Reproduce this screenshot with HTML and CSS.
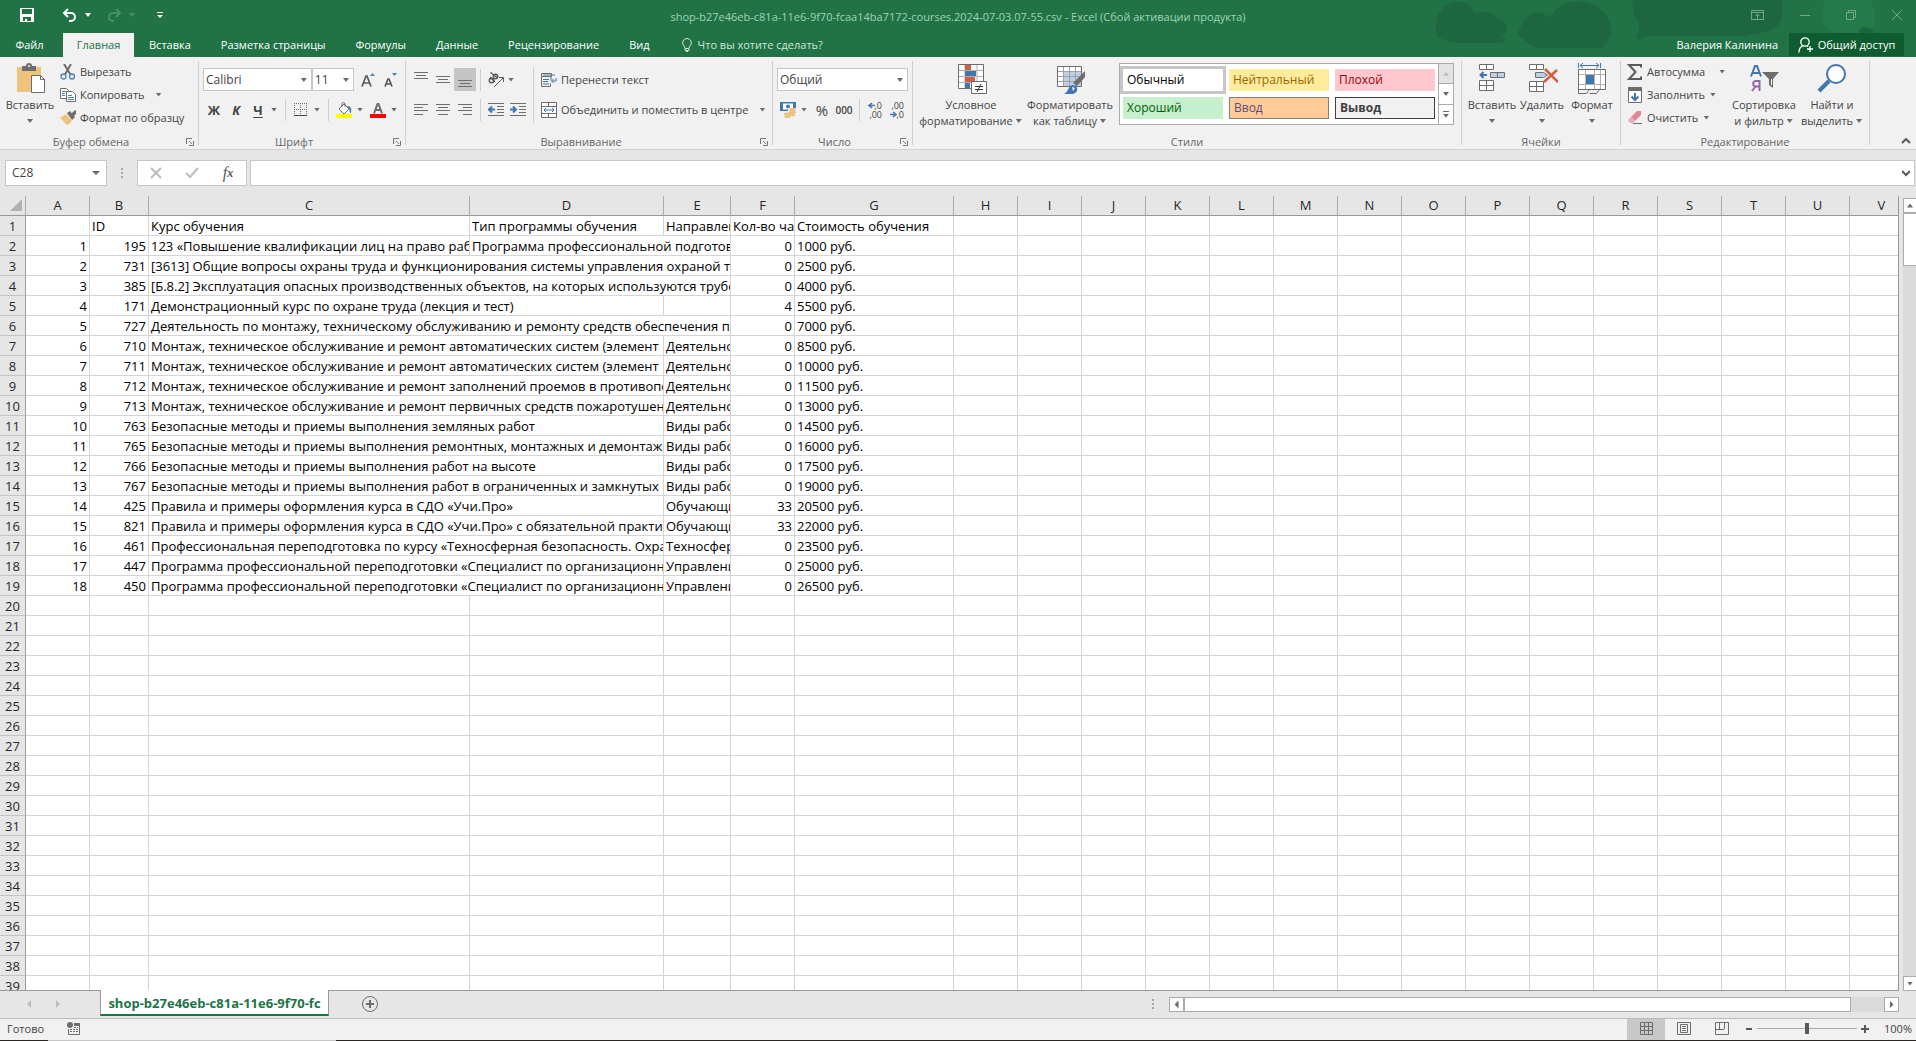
FILE: index.html
```html
<!DOCTYPE html>
<html lang="ru">
<head>
<meta charset="utf-8">
<title>shop-b27e46eb-c81a-11e6-9f70-fcaa14ba7172-courses.2024-07-03.07-55.csv - Excel</title>
<link rel="stylesheet" href="styles.css">
</head>
<body>
<header class="top">
  <svg class="clouds" width="486" height="57" viewBox="0 0 486 57" aria-hidden="true">
    <g fill="#1e663f">
      <path d="M8 38C3 30 6 8 20 3c12-4 22 2 25 10 10-4 20 0 23 6 12 2 10 14 3 18 8 0 6 6-4 6H30c-8 0-16-4-22-5z"/>
      <path d="M92 38c-8 0-2-12 6-22 6-6 16-4 22 2C126 5 140 0 154 2c16 2 28 16 27 30-1 10-8 12-8 16H112c-8 0-14-4-20-10z"/>
      <path d="M202 0h150v20c-10 16-30 12-36 16H218c-10 6-14 4-10-4 4-6 0-12-4-16z"/>
    </g>
    <path fill="#257a4a" d="M396 0h44c8 14 8 28-4 33h-30c-14-6-18-20-10-33z"/>
    <path fill="#1e663f" d="M428 33c2-8 12-8 16 0z"/>
  </svg>
  <div class="titlebar">
    <div class="quick">
      <button class="qbtn" aria-label="Сохранить"><svg width="14" height="14" viewBox="0 0 14 14"><path fill="#fff" fill-rule="evenodd" d="M0 0h14v14H0zM2 1v5h10V1zM3 9v4h2v-2h2v2h4V9z"/></svg></button>
      <button class="qbtn undo" aria-label="Отменить"><svg width="16" height="14" viewBox="0 0 16 14"><path d="M2 5h7a4 4 0 0 1 0 8H7M6 1L2 5l4 4" fill="none" stroke="#fff" stroke-width="2"/></svg><i class="arr"></i></button>
      <button class="qbtn redo" aria-label="Вернуть"><svg width="16" height="14" viewBox="0 0 16 14"><path d="M14 5H7a4 4 0 0 0 0 8h1M10 1l4 4-4 4" fill="none" stroke="#4a8f69" stroke-width="2"/></svg><i class="arr"></i></button>
      <button class="qbtn more" aria-label="Настройка панели"><svg width="6" height="7" viewBox="0 0 6 7"><path fill="#fff" d="M0 0h6v1H0zM0 3h6L3 6z"/></svg></button>
    </div>
    <h1 class="doc">shop-b27e46eb-c81a-11e6-9f70-fcaa14ba7172-courses.2024-07-03.07-55.csv - Excel (Сбой активации продукта)</h1>
    <div class="winctl">
      <button aria-label="Параметры отображения ленты"><svg width="13" height="10" viewBox="0 0 13 10"><path d="M.5.5h12v9H.5zM1 2.500h11M6.500 9V4M4.500 6l2-2 2 2" fill="none" stroke="#72a888"/></svg></button>
      <button aria-label="Свернуть"><svg width="10" height="10" viewBox="0 0 10 10"><path d="M0 5.500h10" stroke="#72a888"/></svg></button>
      <button aria-label="Восстановить"><svg width="10" height="10" viewBox="0 0 10 10"><path d="M.5 2.500h7v7h-7zM2.500 2.500v-2h7v7h-2" fill="none" stroke="#72a888"/></svg></button>
      <button aria-label="Закрыть"><svg width="10" height="10" viewBox="0 0 10 10"><path d="M0 0l10 10M10 0L0 10" fill="none" stroke="#72a888"/></svg></button>
    </div>
  </div>
  <nav class="tabs">
    <button class="tab file">Файл</button>
    <button class="tab active">Главная</button>
    <button class="tab">Вставка</button>
    <button class="tab">Разметка страницы</button>
    <button class="tab">Формулы</button>
    <button class="tab">Данные</button>
    <button class="tab">Рецензирование</button>
    <button class="tab">Вид</button>
    <button class="tab tell"><svg width="10" height="14" viewBox="0 0 10 14"><path d="M3 10.500C3 8 .7 7.500.7 4.700a4.300 4.200 0 0 1 8.600 0C9.300 7.500 7 8 7 10.500zM3 11v1.500h4V11M4 13.500h2" fill="none" stroke="#d5e8dc"/></svg>Что вы хотите сделать?</button>
    <span class="grow"></span>
    <button class="tab user">Валерия Калинина</button>
    <button class="share"><svg width="16" height="16" viewBox="0 0 16 16"><circle cx="7" cy="5" r="4.200" fill="none" stroke="#fff" stroke-width="1.300"/><path d="M1 15.500c0-4 2-6 4-6.800M9 9l1 .7M12 9v6M9 12h6" fill="none" stroke="#fff" stroke-width="1.300"/></svg>Общий доступ</button>
  </nav>
</header>

<section class="ribbon">
  <div class="group g-clip">
    <div class="gbody">
      <button class="big paste"><svg width="32" height="32" viewBox="0 0 32 32"><rect x="3" y="4" width="24" height="25" fill="#eec47c"/><path fill="#6d6d6d" d="M8 3h4a3 3 0 0 1 6 0h4v5H8z"/><circle cx="15" cy="3" r="1" fill="#f0f0f0"/><path d="M17.500 12.500h9l4 4v13h-13z" fill="#fff" stroke="#6d6d6d"/><path d="M26.500 12.500v4h4" fill="none" stroke="#6d6d6d"/></svg><span>Вставить</span><i class="arr"></i></button>
      <div class="stack">
        <button class="small"><svg width="16" height="16" viewBox="0 0 16 16"><path d="M4 0l6.500 10.500M11 0L5 10.500" stroke="#6d6d6d" stroke-width="2" fill="none"/><circle cx="3.500" cy="12.500" r="2.500" fill="none" stroke="#4a80b8" stroke-width="1.300"/><circle cx="12" cy="12.500" r="2.500" fill="none" stroke="#4a80b8" stroke-width="1.300"/></svg>Вырезать</button>
        <button class="small"><svg width="16" height="16" viewBox="0 0 16 16"><path d="M.5 1.500h6l2 2v8h-8z" fill="#fff" stroke="#6d6d6d"/><path d="M2 4.500h4M2 6.500h3M2 8.500h3" stroke="#4a80b8"/><path d="M6.500 4.500h6l3 3v7h-9z" fill="#fff" stroke="#6d6d6d"/><path d="M8 8.500h4M8 10.500h6M8 12.500h6" stroke="#4a80b8"/></svg>Копировать<i class="arr far"></i></button>
        <button class="small"><svg width="16" height="16" viewBox="0 0 16 16"><path fill="#6d6d6d" d="M12 3l3-3 1 1v3l-3 3zM7 3l3-2 5 6-3 3z"/><path fill="#eec47c" d="M6 4l6 7-4 4-2-1L0 8z"/></svg>Формат по образцу</button>
      </div>
    </div>
    <div class="glabel">Буфер обмена<button class="launch" aria-label="Буфер обмена: параметры"><svg width="8" height="8" viewBox="0 0 8 8"><path d="M.5 6V.5H6M3 3l3 3M7.500 3v4.500H3" fill="none" stroke="#777"/></svg></button></div>
  </div>

  <div class="group g-font">
    <div class="gbody rows">
      <div class="row">
        <label class="combo c-font"><select aria-label="Шрифт"><option>Calibri</option></select><i class="arr"></i></label><label class="combo c-size"><select aria-label="Размер шрифта"><option>11</option></select><i class="arr"></i></label>
        <button class="ico22" aria-label="Увеличить размер"><svg width="16" height="16" viewBox="0 0 16 16"><path d="M2 14.500L6 4h1l4 10.500M3.500 11h6" fill="none" stroke="#595959" stroke-width="1.700"/><path fill="#4a80b8" d="M10 4l2.500-3L15 4z"/></svg></button>
        <button class="ico22" aria-label="Уменьшить размер"><svg width="16" height="16" viewBox="0 0 16 16"><path d="M3 14.500L6 7h1l3 7.500M4 12h5" fill="none" stroke="#595959" stroke-width="1.700"/><path fill="#4a80b8" d="M10 1h5l-2.500 3z"/></svg></button>
      </div>
      <div class="row fmt">
        <button class="ico16 b">Ж</button>
        <button class="ico16 b i">К</button>
        <button class="split"><span class="ico16 b u">Ч</span><i class="arr"></i></button>
        <i class="vsep"></i>
        <button class="split" aria-label="Границы"><svg width="16" height="16" viewBox="0 0 16 16"><path d="M1.500 1v12M7.500 1v12M13.500 1v12M1 1.500h13M1 7.500h13" fill="none" stroke="#6d6d6d" stroke-dasharray="1 1"/><path d="M1 13.500h13" stroke="#444"/></svg><i class="arr"></i></button>
        <i class="vsep"></i>
        <button class="split" aria-label="Цвет заливки"><svg width="16" height="16" viewBox="0 0 16 16"><path d="M3 7l5-5 5 5-5 5z" fill="#fff" stroke="#6d6d6d"/><path d="M6 5V2a1.500 1.500 0 0 1 3 0v3" fill="none" stroke="#6d6d6d"/><path fill="#4a80b8" d="M11 4c4 0 5 2 4 7-2 0-1-3-2-4z"/><path fill="#ff0" d="M0 12h16v4H0z"/></svg><i class="arr"></i></button>
        <button class="split" aria-label="Цвет текста"><svg width="16" height="16" viewBox="0 0 16 16"><path d="M4 11.500L7.500 2h1L12 11.500M5 8h6" fill="none" stroke="#6d6d6d" stroke-width="2"/><path fill="red" d="M0 12h16v4H0z"/></svg><i class="arr"></i></button>
      </div>
    </div>
    <div class="glabel">Шрифт<button class="launch" aria-label="Шрифт: параметры"><svg width="8" height="8" viewBox="0 0 8 8"><path d="M.5 6V.5H6M3 3l3 3M7.500 3v4.500H3" fill="none" stroke="#777"/></svg></button></div>
  </div>

  <div class="group g-align">
    <div class="gbody">
      <div class="rows tight">
        <div class="row">
          <button class="ico22" aria-label="По верхнему краю"><svg width="14" height="16" viewBox="0 0 14 16"><path d="M0 .5h14M2 3.500h10M0 6.500h14" stroke="#6d6d6d"/></svg></button>
          <button class="ico22" aria-label="По середине"><svg width="14" height="16" viewBox="0 0 14 16"><path d="M0 4.500h14M2 7.500h10M0 10.500h14" stroke="#6d6d6d"/></svg></button>
          <button class="ico22 on" aria-label="По нижнему краю"><svg width="14" height="16" viewBox="0 0 14 16"><path d="M0 8.500h14M2 11.500h10M0 14.500h14" stroke="#6d6d6d"/></svg></button>
          <i class="vsep"></i>
          <button class="split orient" aria-label="Ориентация"><svg width="18" height="16" viewBox="0 0 18 16"><g fill="none" stroke="#595959" stroke-width="1.400"><circle cx="4.500" cy="8.500" r="2.200"/><path d="M3 5l5 5"/><circle cx="8.500" cy="4.500" r="2.200"/><path d="M3.500.5l6.500 5"/></g><path d="M7 15L16 6M12 5.500h4.500V10" fill="none" stroke="#595959"/></svg><i class="arr"></i></button>
        </div>
        <div class="row">
          <button class="ico22" aria-label="По левому краю"><svg width="14" height="12" viewBox="0 0 14 12"><path d="M0 .5h14M0 3.500h9M0 6.500h14M0 10.500h9" stroke="#6d6d6d"/></svg></button>
          <button class="ico22" aria-label="По центру"><svg width="14" height="12" viewBox="0 0 14 12"><path d="M0 .5h14M2 3.500h10M0 6.500h14M2 10.500h10" stroke="#6d6d6d"/></svg></button>
          <button class="ico22" aria-label="По правому краю"><svg width="14" height="12" viewBox="0 0 14 12"><path d="M0 .5h14M5 3.500h9M0 6.500h14M5 10.500h9" stroke="#6d6d6d"/></svg></button>
          <i class="vsep"></i>
          <button class="ico22" aria-label="Уменьшить отступ"><svg width="16" height="14" viewBox="0 0 16 14"><path d="M0 .5h16M9 3.500h7M9 6.500h7M9 9.500h7M0 12.500h16" stroke="#6d6d6d"/><path d="M1 6.500h6M4 3.500l-3 3 3 3" fill="none" stroke="#3f76b0" stroke-width="2"/></svg></button>
          <button class="ico22" aria-label="Увеличить отступ"><svg width="16" height="14" viewBox="0 0 16 14"><path d="M0 .5h16M9 3.500h7M9 6.500h7M9 9.500h7M0 12.500h16" stroke="#6d6d6d"/><path d="M0 6.500h6M3 3.500l3 3-3 3" fill="none" stroke="#3f76b0" stroke-width="2"/></svg></button>
        </div>
      </div>
      <i class="vsep tall"></i>
      <div class="rows tight texts">
        <button class="small"><svg width="16" height="16" viewBox="0 0 16 16"><path d="M.5 1.500h10v3H.5zM.5 4.500v10h9v-3M10 4.500v4" fill="none" stroke="#6d6d6d"/><path d="M2 3h12M2 7.500h6M2 9.500h5M2 12h6M15 6v3h-4M12.500 7L10.500 9l2 2" fill="none" stroke="#3f76b0"/></svg>Перенести текст</button>
        <button class="small merge"><svg width="16" height="16" viewBox="0 0 16 16"><path d="M.5.5h15v15H.500zM.5 4.500h15M.5 11.500h15M7.500.5v4M7.500 11.500v4" fill="#fff" stroke="#6d6d6d"/><path d="M3 8h10M5 6L3 8l2 2M11 6l2 2-2 2" fill="none" stroke="#3f76b0"/></svg>Объединить и поместить в центре<i class="arr far"></i></button>
      </div>
    </div>
    <div class="glabel">Выравнивание<button class="launch" aria-label="Выравнивание: параметры"><svg width="8" height="8" viewBox="0 0 8 8"><path d="M.5 6V.5H6M3 3l3 3M7.500 3v4.500H3" fill="none" stroke="#777"/></svg></button></div>
  </div>

  <div class="group g-num">
    <div class="gbody rows">
      <div class="row"><label class="combo c-num"><select aria-label="Числовой формат"><option>Общий</option></select><i class="arr"></i></label></div>
      <div class="row num">
        <button class="split" aria-label="Финансовый формат"><svg width="16" height="16" viewBox="0 0 16 16"><path fill="#3f76b0" d="M0 0h16v9H0z"/><path fill="#fff" d="M3 1.500h10v6H3z"/><circle cx="8" cy="4.500" r="2" fill="#3f76b0"/><path fill="#f0f0f0" d="M8 6h8v10H4v-5h4z"/><g fill="#eabf76"><ellipse cx="12.500" cy="7.500" rx="3.500" ry="1.400"/><ellipse cx="12.500" cy="10.500" rx="3.500" ry="1.400"/><ellipse cx="7.500" cy="12" rx="3.500" ry="1.400"/><ellipse cx="7.500" cy="14.600" rx="3.500" ry="1.400"/><ellipse cx="12.500" cy="13" rx="2.500" ry="1.200"/></g></svg><i class="arr"></i></button>
        <div class="row">
        <button class="ico22 pct">%</button>
        <button class="ico22 ths">000</button>
        <i class="vsep"></i>
        <button class="ico22 dec" aria-label="Увеличить разрядность"><span><svg width="7" height="7" viewBox="0 0 7 7"><path d="M1 3.500h6M4 1L1 3.500 4 6" fill="none" stroke="#3f76b0" stroke-width="1.500"/></svg>,0</span><span>,00</span></button>
        <button class="ico22 dec" aria-label="Уменьшить разрядность"><span>,00</span><span><svg width="7" height="7" viewBox="0 0 7 7"><path d="M0 3.500h6M3 1l3 2.500L3 6" fill="none" stroke="#3f76b0" stroke-width="1.500"/></svg>,0</span></button>
        </div>
      </div>
    </div>
    <div class="glabel">Число<button class="launch" aria-label="Число: параметры"><svg width="8" height="8" viewBox="0 0 8 8"><path d="M.5 6V.5H6M3 3l3 3M7.500 3v4.500H3" fill="none" stroke="#777"/></svg></button></div>
  </div>

  <div class="group g-styles">
    <div class="gbody">
      <button class="big cond"><svg width="32" height="32" viewBox="0 0 32 32"><path d="M3.500 1.500h25v24h-25z" fill="#fff" stroke="#6d6d6d"/><path d="M4 7.500h24M4 13.500h24M4 19.500h24M10 2v23M22 2v23" stroke="#b0b0b0" fill="none"/><path fill="#d05f3f" d="M10 2h6v5h-6zM10 14h10v5H10z"/><path fill="#3f76b0" d="M10 8h11v5H10zM10 20h5v5h-5z"/><path d="M16.500 18.500h15v12h-15z" fill="#fff" stroke="#6d6d6d"/><path d="M20 23.500h8M20 26.500h8M26 21l-4 8" stroke="#333"/></svg><span>Условное</span><span>форматирование<i class="arr"></i></span></button>
      <button class="big fmtbl"><svg width="32" height="32" viewBox="0 0 32 32"><path d="M3.500 3.500h24v20h-24z" fill="#fff" stroke="#6d6d6d"/><path fill="#bdd0e6" d="M9 9h18v14H9z"/><path d="M9.500 4v19M15.500 4v19M21.500 4v19M4 8.500h23M4 13.500h23M4 18.500h23" stroke="#a0a0a0"/><path fill="#6d6d6d" d="M31 8v6L23 23l-4-3z"/><path fill="#3f76b0" d="M10 31c5-2 4-9 9-9 6 1 6 9-2 9z"/><path fill="#fff" d="M18 24l3 1-2 3z"/></svg><span>Форматировать</span><span>как таблицу<i class="arr"></i></span></button>
      <div class="gallery">
        <div class="swatches">
          <button class="sw s-normal">Обычный</button><button class="sw s-neutral">Нейтральный</button><button class="sw s-bad">Плохой</button>
          <button class="sw s-good">Хороший</button><button class="sw s-input">Ввод</button><button class="sw s-output">Вывод</button>
        </div>
        <div class="gscroll"><button class="off" aria-label="Вверх"><i class="arr up"></i></button><button aria-label="Вниз"><i class="arr"></i></button><button class="all" aria-label="Все стили"><i class="arr"></i></button></div>
      </div>
    </div>
    <div class="glabel">Стили</div>
  </div>

  <div class="group g-cells">
    <div class="gbody">
      <button class="big"><svg width="32" height="32" viewBox="0 0 32 32"><g fill="#fff" stroke="#6d6d6d"><path d="M3.500 1.500h14v5h-14zM10.500 1.500v5M3.500 17.500h14v10h-14zM3.500 22.500h14M10.500 17.500v10"/><path fill="#bdd0e6" d="M14.500 9.500h14v5h-14zM21.500 9.500v5"/></g><path d="M4 12h7M7.500 9L4.500 12l3 3" fill="none" stroke="#3f76b0" stroke-width="2"/></svg><span>Вставить</span><i class="arr"></i></button>
      <button class="big"><svg width="32" height="32" viewBox="0 0 32 32"><g fill="#fff" stroke="#6d6d6d"><path d="M3.500 1.500h14v5h-14zM10.500 1.500v5M3.500 18.500h14v10h-14zM3.500 23.500h14M10.500 18.500v10"/><path fill="#bdd0e6" d="M9.500 9.500h8l4 2.500-4 2.500h-8z"/></g><path d="M19 6l13 13M31 7L18 19" stroke="#d05f3f" stroke-width="2.500"/></svg><span>Удалить</span><i class="arr"></i></button>
      <button class="big"><svg width="32" height="32" viewBox="0 0 32 32"><path d="M2.500 6.500h27v20h-27z" fill="#fff" stroke="#6d6d6d"/><path d="M9.500 7v19M18.500 7v19M24.500 7v19M3 11.500h26M3 21.500h26" stroke="#b0b0b0"/><path fill="#3f76b0" d="M10 12h8v9h-8z"/><path d="M2.500 0v5M24.500 0v5M4 2.500h19M7 0L4 2.500 7 5M20 0l3 2.500L20 5" fill="none" stroke="#3f76b0"/><path d="M2.500 26v4.500h8l3-4M13.500 30.500h7l3-4" fill="none" stroke="#6d6d6d"/></svg><span>Формат</span><i class="arr"></i></button>
    </div>
    <div class="glabel">Ячейки</div>
  </div>

  <div class="group g-edit">
    <div class="gbody">
      <div class="stack">
        <button class="small"><svg width="16" height="16" viewBox="0 0 16 16"><path d="M14 3.500V1H2l6.500 7L2 15h12v-2.500" fill="none" stroke="#595959" stroke-width="2"/></svg>Автосумма<i class="arr far"></i></button>
        <button class="small"><svg width="16" height="16" viewBox="0 0 16 16"><path d="M1.500.5h13v15h-13z" fill="#fff" stroke="#6d6d6d"/><path fill="#6d6d6d" d="M1 0h14v4H1z"/><path d="M8 6v7M4.500 9.500L8 13l3.500-3.500" fill="none" stroke="#3f76b0" stroke-width="2"/></svg>Заполнить<i class="arr"></i></button>
        <button class="small"><svg width="16" height="16" viewBox="0 0 16 16"><path fill="#e58494" d="M10 1h4v4L8 11 4 7z"/><path fill="#eda9b4" d="M4 7l4 4-2 2H3L1 10z"/><path d="M6 13.500h9" stroke="#6d6d6d"/></svg>Очистить<i class="arr"></i></button>
      </div>
      <button class="big"><svg width="32" height="32" viewBox="0 0 32 32"><g fill="none" stroke-width="2"><path stroke="#3f76b0" d="M3 13.500L7 3h2l4 10.500M4.500 10h7"/><path stroke="#9a65b0" d="M11.500 28V18H7.500a2.800 2.800 0 0 0 0 5.500h4M7.500 23.500L4 28"/></g><path fill="#6d6d6d" d="M14 9h17l-6 7v9l-4-3v-6z"/><path d="M23.500 16v6" stroke="#fff"/></svg><span>Сортировка</span><span>и фильтр<i class="arr"></i></span></button>
      <button class="big"><svg width="32" height="32" viewBox="0 0 32 32"><circle cx="20" cy="11" r="9" fill="#fff" stroke="#3f76b0" stroke-width="2"/><path d="M13 18L3 28" stroke="#3f76b0" stroke-width="4"/></svg><span>Найти и</span><span>выделить<i class="arr"></i></span></button>
    </div>
    <div class="glabel">Редактирование</div>
  </div>
  <button class="collapse" aria-label="Свернуть ленту"><svg width="10" height="6" viewBox="0 0 10 6"><path d="M1 5l4-4 4 4" fill="none" stroke="#595959" stroke-width="2"/></svg></button>
</section>

<section class="fbar">
  <div class="namebox"><input type="text" value="C28" aria-label="Имя ячейки"><i class="arr wide"></i></div>
  <i class="dots"></i>
  <div class="fbtns">
    <button aria-label="Отмена"><svg width="12" height="12" viewBox="0 0 12 12"><path d="M1 1l10 10M11 1L1 11" stroke="#bdbdbd" stroke-width="2"/></svg></button>
    <button aria-label="Ввод"><svg width="14" height="12" viewBox="0 0 14 12"><path d="M1 6l4 4 8-9" fill="none" stroke="#bdbdbd" stroke-width="2"/></svg></button>
    <button class="fx" aria-label="Вставить функцию"><em>f</em><sub>x</sub></button>
  </div>
  <div class="formula"><input type="text" aria-label="Строка формул"><svg width="8" height="7" viewBox="0 0 8 7"><path d="M0 1l4 4 4-4" fill="none" stroke="#595959" stroke-width="2"/></svg></div>
</section>

<main class="work">
  <div class="sheet"><table class="grid" id="grid"></table></div>
  <div class="vscroll"><button aria-label="Прокрутить вверх"><i class="arr up"></i></button><div class="vthumb"></div><span class="grow"></span><button aria-label="Прокрутить вниз"><i class="arr"></i></button></div>
</main>

<section class="sheets">
  <div class="snav"><i class="tri left"></i><i class="tri right"></i></div>
  <button class="stab">shop-b27e46eb-c81a-11e6-9f70-fc</button>
  <button class="plus" aria-label="Новый лист"><svg width="16" height="16" viewBox="0 0 16 16"><circle cx="8" cy="8" r="7.500" fill="none" stroke="#6d6d6d"/><path d="M8 4v8M4 8h8" stroke="#6d6d6d" stroke-width="2"/></svg></button>
  <span class="grow"></span>
  <i class="dots"></i>
  <div class="hscroll"><button aria-label="Влево"><i class="tri left"></i></button><div class="hthumb"></div><button aria-label="Вправо"><i class="tri right"></i></button></div>
</section>

<footer class="status">
  <span class="ready">Готово</span>
  <svg width="13" height="13" viewBox="0 0 13 13"><circle cx="3" cy="3" r="3" fill="#6d6d6d"/><path fill="#6d6d6d" d="M7 1h6v3H7z"/><path d="M1.500 7v5.500h11V4" fill="none" stroke="#6d6d6d"/><path d="M3 7.500h8M3 9.500h8M7 5.500h4" stroke="#6d6d6d" stroke-dasharray="2 1"/></svg>
  <span class="grow"></span>
  <button class="view on" aria-label="Обычный"><svg width="13" height="13" viewBox="0 0 13 13"><path d="M.5.5h12v12H.500zM4.500 0v13M8.500 0v13M0 4.500h13M0 8.500h13" fill="none" stroke="#6d6d6d"/></svg></button>
  <button class="view" aria-label="Разметка страницы"><svg width="14" height="13" viewBox="0 0 14 13"><path d="M.5.5h13v12H.500zM3.500 2.500h7v8h-7zM5 4.500h4M5 6.500h4M5 8.500h4" fill="none" stroke="#6d6d6d"/></svg></button>
  <button class="view" aria-label="Страничный режим"><svg width="14" height="13" viewBox="0 0 14 13"><path d="M.5.5h13v12H.500zM4.500 0v7M9.500 0v7M0 7.500h9" fill="none" stroke="#6d6d6d"/></svg></button>
  <div class="zoom">
    <button aria-label="Уменьшить"><svg width="8" height="8" viewBox="0 0 8 8"><path d="M1 4h6" stroke="#595959" stroke-width="2"/></svg></button>
    <input type="range" min="0" max="100" value="50" aria-label="Масштаб">
    <button aria-label="Увеличить"><svg width="8" height="8" viewBox="0 0 8 8"><path d="M0 4h8M4 0v8" stroke="#595959" stroke-width="2"/></svg></button>
    <button class="pc">100%</button>
  </div>
</footer>
<div class="edge"></div>
<script src="grid.js"></script>
</body>
</html>
```
FILE: styles.css
```css
* { box-sizing: border-box; }
body {
  margin: 0; height: 100vh; overflow: hidden;
  display: flex; flex-direction: column;
  background: #e6e6e6; color: #444;
  font: 11px/16px "Open Sans", "Noto Sans", sans-serif;
}
button, input, select { font: inherit; color: inherit; background: none; border: 0; padding: 0; margin: 0; border-radius: 0; outline: 0; }
button { display: flex; align-items: center; justify-content: center; white-space: nowrap; }
svg { display: block; flex: none; }
.grow { flex: 1; }

.arr { display: block; flex: none; width: 8px; height: 4px; background: #6b6b6b; clip-path: polygon(1px 0, 7px 0, 4px 4px); }
.arr.up { clip-path: polygon(1px 4px, 7px 4px, 4px 0); }
.arr.wide { clip-path: polygon(0 0, 8px 0, 4px 4px); }
.tri { display: block; width: 4px; height: 8px; background: #6b6b6b; }
.tri.left { clip-path: polygon(4px 0, 4px 8px, 0 4px); }
.tri.right { clip-path: polygon(0 0, 0 8px, 4px 4px); }

/* title and tabs */
.top { position: relative; flex: none; background: #217346; color: #fff; }
.clouds { position: absolute; right: 0; top: 0; }
.titlebar { position: relative; display: grid; grid-template-columns: 1fr auto 1fr; height: 33px; }
.quick { display: flex; align-items: flex-start; padding: 8px 0 0 20px; }
.qbtn { gap: 6px; height: 14px; }
.qbtn .arr { background: #fff; }
.undo { margin-left: 28px; }
.redo { margin-left: 14px; }
.redo .arr { background: #4a8f69; }
.more { margin-left: 21px; }
.doc { margin: 0; padding-top: 9px; font-size: 11px; line-height: 16px; font-weight: 400; color: #9fd3b5; }
.winctl { display: flex; justify-content: flex-end; align-items: flex-start; padding: 10px 14px 0 0; gap: 36px; }
.tabs { position: relative; display: flex; height: 24px; }
.tab { padding: 0 15px; }
.tab.file { width: 63px; padding: 0 19px 0 15px; }
.tab.active { width: 71px; background: #f1f1f1; color: #217346; }
.tab.tell { gap: 6px; color: #cfe6d9; margin-left: 2px; }
.user { padding: 0 11px; }
.share { width: 115px; height: 23px; margin-right: 12px; gap: 4px; background: #0f5c30; }

/* ribbon */
.ribbon { flex: none; display: flex; height: 93px; padding-top: 4px; background: #f1f1f1; border-bottom: 1px solid #d2d2d2; }
.group { display: flex; flex-direction: column; height: 84px; border-right: 1px solid #d0d0d0; }
.gbody { display: flex; height: 70px; }
.glabel { position: relative; height: 14px; line-height: 22px; text-align: center; padding-right: 16px; color: #666; }
.g-styles .glabel, .g-cells .glabel, .g-edit .glabel { padding-right: 0; }
.launch { position: absolute; right: 4px; top: 7px; width: 8px; height: 8px; }
.g-clip { width: 199px; }
.g-font { width: 207px; }
.g-align { width: 367px; }
.g-num { width: 140px; }
.g-styles { flex: 1; }
.g-cells { width: 159px; }
.g-edit { width: 249px; }

.big { flex-direction: column; justify-content: flex-start; width: 50px; padding-top: 2px; }
.big svg { margin-bottom: 2px; }
.big span { display: flex; align-items: center; gap: 2px; height: 16px; }
.big > .arr { margin-top: 6px; }
.paste { width: 56px; margin: 0 2px; }
.g-cells .gbody { padding-left: 5px; }
.g-edit .big { width: 68px; }
.g-edit .stack { width: 109px; padding-left: 6px; }
.stack { display: flex; flex-direction: column; }
.small { justify-content: flex-start; height: 23px; gap: 4px; }
.stack .small { padding-bottom: 2px; }
.small .far { margin-left: 6px; }
.g-edit .small .far { margin-left: 9px; }

.rows { display: flex; flex-direction: column; gap: 7px; padding: 7px 4px 0; }
.rows.tight { padding-bottom: 0; padding-right: 0; }
.row { display: flex; align-items: center; height: 23px; }
.fmt { gap: 6px; padding-left: 3px; }
.num { gap: 3px; padding-left: 3px; }
.combo { position: relative; display: flex; height: 23px; background: #fff; border: 1px solid #c6c6c6; }
.combo select { appearance: none; width: 100%; padding-left: 2px; font-size: 12px; }
.combo .arr { position: absolute; right: 3px; top: 9px; }
.c-font { width: 111px; }
.c-size { width: 43px; margin-right: 3px; }
.c-num { width: 131px; }
.ico22 { width: 22px; height: 23px; flex: none; }
.ico22.on { background: #c5c5c5; }
.ico16 { display: block; width: 16px; height: 20px; line-height: 20px; text-align: center; }
.b { font-size: 13px; font-weight: 700; }
.i { font-style: italic; }
.u { text-decoration: underline; text-underline-offset: 2px; }
.split { gap: 4px; }
.orient { gap: 2px; padding-left: 2px; }
.vsep { display: block; flex: none; width: 1px; height: 22px; background: #d0d0d0; }
.fmt .vsep { margin: 0 1px; }
.g-align .vsep, .g-num .vsep { margin: 0 4px; }
.g-align .vsep.tall { height: 56px; margin: 6px 0 0 0; }
.g-align .tight .row { width: 123px; }
.texts { padding-left: 7px; }
.pct { font-size: 15px; }
.ths { font-size: 10px; font-weight: 600; }
.dec { flex-direction: column; align-items: flex-end; padding-right: 4px; font-size: 9px; line-height: 9px; }
.dec span { display: flex; align-items: center; height: 9px; }

.cond { width: 104px; margin-left: 6px; }
.fmtbl { width: 94px; margin-right: 2px; }
.gallery { display: flex; flex: 1; height: 62px; margin: 2px 7px 0 0; border: 1px solid #ababab; background: #fff; }
.swatches { flex: 1; display: grid; grid-template-columns: repeat(3, 1fr); grid-auto-rows: 22px; gap: 6px; padding: 5px 3px; }
.sw { justify-content: flex-start; padding-left: 4px; font-size: 12px; }
.s-normal { background: #fff; color: #000; box-shadow: 0 0 0 3px #c6c6c6; }
.s-neutral { background: #ffeb9c; color: #9c6500; }
.s-bad { background: #ffc7ce; color: #9c0006; }
.s-good { background: #c6efce; color: #006100; }
.s-input { background: #ffcc99; color: #5f4a76; border: 1px solid #7f7f7f; }
.s-output { background: #f2f2f2; color: #3f3f3f; border: 1px solid #3f3f3f; font-weight: 700; }
.gscroll { display: flex; flex-direction: column; width: 15px; border-left: 1px solid #ababab; }
.gscroll button { flex: 1; width: 100%; }
.gscroll button + button { border-top: 1px solid #ababab; }
.gscroll .off { background: #e3e3e3; }
.gscroll .off .arr { background: #bdbdbd; }
.gscroll .all { flex-direction: column; gap: 2px; }
.gscroll .all::before { content: ""; width: 6px; height: 1px; background: #6b6b6b; }
.collapse { width: 46px; align-self: flex-end; height: 16px; padding: 0 0 0 26px; }

/* formula bar */
.fbar { flex: none; display: flex; align-items: flex-start; height: 46px; padding: 10px 1px 0 5px; }
.namebox, .fbtns, .formula { display: flex; align-items: center; height: 26px; border: 1px solid #c6c6c6; background: #fff; }
.namebox { width: 102px; padding-right: 6px; }
.namebox input { width: 86px; padding-left: 6px; font-size: 12px; }
.dots { display: block; flex: none; width: 2px; height: 10px; background: repeating-linear-gradient(#a6a6a6 0 2px, transparent 2px 4px); }
.fbar .dots { margin: 8px 14px 0; }
.fbtns { width: 110px; margin-right: 3px; }
.fbtns button { width: 36px; }
.fx { font-family: "Liberation Serif", serif; font-size: 16px; color: #595959; }
.fx sub { font-size: 12px; font-style: italic; line-height: 8px; font-weight: 700; }
.formula { flex: 1; padding-right: 4px; }
.formula input { flex: 1; min-width: 0; }

/* sheet */
.work { flex: 1; min-height: 0; display: flex; }
.sheet { flex: 1; min-width: 0; overflow: hidden; border-right: 1px solid #999; border-bottom: 1px solid #999; background: #fff; }
.grid { table-layout: fixed; width: 1914px; border-collapse: separate; border-spacing: 0; color: #000; font-size: 13px; line-height: 18px; }
.grid td, .grid th { height: 20px; padding: 1px 2px 0; border-right: 1px solid #d4d4d4; border-bottom: 1px solid #d4d4d4; overflow: hidden; white-space: nowrap; }
.grid .n { text-align: right; }
.grid th { padding: 0; background: #e6e6e6; border-color: #c3c3c3; font-weight: 400; color: #262626; text-align: center; }
.grid thead th { padding-bottom: 1px; border-bottom-color: #999; border-right-color: #ababab; }
.grid tbody th { border-right-color: #999; }
.corner i { display: block; width: 12px; height: 12px; margin-left: 10px; background: #b1b1b1; clip-path: polygon(100% 0, 100% 100%, 0 100%); }
.w-head { width: 26px; } .w-a { width: 64px; } .w-b { width: 59px; } .w-c { width: 321px; }
.w-d { width: 194px; } .w-e { width: 67px; } .w-g { width: 159px; }
.vscroll { display: flex; flex-direction: column; width: 13px; margin: 2px 0 0 4px; background: #dadada; }
.vscroll button { height: 15px; width: 13px; background: #fff; border: 1px solid #ababab; border-right: 0; }
.vthumb { height: 53px; background: #fff; border: 1px solid #ababab; border-right: 0; }

/* sheet tabs */
.sheets { flex: none; display: flex; height: 28px; padding-right: 17px; border-bottom: 1px solid #bcbcbc; }
.snav { display: flex; gap: 25px; width: 100px; padding: 9px 0 0 27px; }
.snav .tri { background: #bdbdbd; }
.stab { position: relative; top: -1px; width: 229px; height: 26px; padding-top: 2px; background: #fff; border: 1px solid #999; border-top: 0; border-bottom: 2px solid #217346; color: #217346; font-size: 13px; font-weight: 700; }
.plus { margin: 0 0 2px 33px; }
.sheets .dots { margin: 8px 15px 0 0; }
.hscroll { display: flex; width: 730px; height: 15px; margin-top: 6px; background: #dadada; }
.hscroll button { width: 15px; background: #fff; border: 1px solid #ababab; }
.hthumb { width: 667px; margin: 0 auto 0 0; background: #fff; border: 1px solid #ababab; }

/* status bar */
.status { flex: none; display: flex; align-items: center; height: 21px; padding: 0 4px 2px 7px; background: #f1f1f1; }
.ready { margin-right: 23px; }
.view { width: 38px; height: 21px; margin-bottom: -2px; padding-bottom: 2px; }
.view.on { background: #c8c8c8; }
.zoom { display: flex; align-items: center; gap: 3px; margin-left: 4px; }
.zoom input { appearance: none; width: 100px; height: 12px; margin: 0 1px; background: linear-gradient(#ababab, #ababab) 0 5px / 100% 1px no-repeat; }
.zoom input::-webkit-slider-thumb { appearance: none; width: 4px; height: 11px; background: #595959; }
.pc { width: 40px; justify-content: flex-end; }
.edge { flex: none; height: 1px; background: linear-gradient(90deg, #2b261f 48px, #c6c6c6 48px 336px, #2b261f 336px); }
```
FILE: grid.js
```js
// Each row: [A, B, C, D, E, F, G]; null marks a cell covered by text spilling from the left.
const rows = [
  ['', 'ID', 'Курс обучения', 'Тип программы обучения', 'Направлен', 'Кол-во ча', 'Стоимость обучения'],
  [1, 195, '123 «Повышение квалификации лиц на право рабо', 'Программа профессиональной подготов', null, 0, '1000 руб.'],
  [2, 731, '[3613] Общие вопросы охраны труда и функционирования системы управления охраной тр', null, null, 0, '2500 руб.'],
  [3, 385, '[Б.8.2] Эксплуатация опасных производственных объектов, на которых используются трубо', null, null, 0, '4000 руб.'],
  [4, 171, 'Демонстрационный курс по охране труда (лекция и тест)', null, '', 4, '5500 руб.'],
  [5, 727, 'Деятельность по монтажу, техническому обслуживанию и ремонту средств обеспечения п', null, null, 0, '7000 руб.'],
  [6, 710, 'Монтаж, техническое обслуживание и ремонт автоматических систем (элемент', null, 'Деятельно', 0, '8500 руб.'],
  [7, 711, 'Монтаж, техническое обслуживание и ремонт автоматических систем (элемент', null, 'Деятельно', 0, '10000 руб.'],
  [8, 712, 'Монтаж, техническое обслуживание и ремонт заполнений проемов в противопо', null, 'Деятельно', 0, '11500 руб.'],
  [9, 713, 'Монтаж, техническое обслуживание и ремонт первичных средств пожаротушен', null, 'Деятельно', 0, '13000 руб.'],
  [10, 763, 'Безопасные методы и приемы выполнения земляных работ', null, 'Виды рабо', 0, '14500 руб.'],
  [11, 765, 'Безопасные методы и приемы выполнения ремонтных, монтажных и демонтаж', null, 'Виды рабо', 0, '16000 руб.'],
  [12, 766, 'Безопасные методы и приемы выполнения работ на высоте', null, 'Виды рабо', 0, '17500 руб.'],
  [13, 767, 'Безопасные методы и приемы выполнения работ в ограниченных и замкнутых п', null, 'Виды рабо', 0, '19000 руб.'],
  [14, 425, 'Правила и примеры оформления курса в СДО «Учи.Про»', null, 'Обучающи', 33, '20500 руб.'],
  [15, 821, 'Правила и примеры оформления курса в СДО «Учи.Про» с обязательной практич', null, 'Обучающи', 33, '22000 руб.'],
  [16, 461, 'Профессиональная переподготовка по курсу «Техносферная безопасность. Охра', null, 'Техносфер', 0, '23500 руб.'],
  [17, 447, 'Программа профессиональной переподготовки «Специалист по организационн', null, 'Управлени', 0, '25000 руб.'],
  [18, 450, 'Программа профессиональной переподготовки «Специалист по организационн', null, 'Управлени', 0, '26500 руб.']
];
const letters = 'ABCDEFGHIJKLMNOPQRSTUV'.split('');
const widths = { A: 'w-a', B: 'w-b', C: 'w-c', D: 'w-d', E: 'w-e', G: 'w-g' };
const ROW_COUNT = 39;

let html = '<colgroup><col class="w-head">' + letters.map(l => `<col class="${widths[l] || 'w-a'}">`).join('') + '</colgroup>';
html += '<thead><tr><th class="corner"><i></i></th>' + letters.map(l => `<th scope="col">${l}</th>`).join('') + '</tr></thead><tbody>';
for (let r = 0; r < ROW_COUNT; r++) {
  const data = rows[r] || [];
  html += `<tr><th scope="row">${r + 1}</th>`;
  for (let c = 0; c < letters.length; c++) {
    const value = data[c];
    if (value === null) continue;
    let span = 1;
    while (data[c + span] === null) span++;
    html += `<td${span > 1 ? ` colspan="${span}"` : ''}${typeof value === 'number' ? ' class="n"' : ''}>${value === undefined ? '' : value}</td>`;
  }
  html += '</tr>';
}
document.getElementById('grid').innerHTML = html + '</tbody>';
```
